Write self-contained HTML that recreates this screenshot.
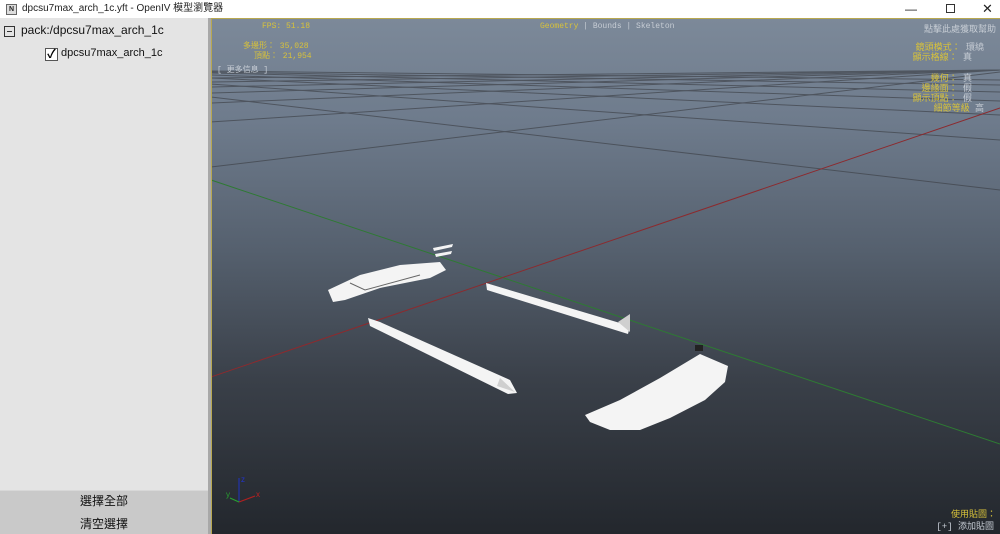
<!DOCTYPE html>
<html><head><meta charset="utf-8"><style>
*{margin:0;padding:0;box-sizing:border-box}
body{width:1000px;height:534px;overflow:hidden;font-family:"Liberation Sans","Noto Sans CJK TC",sans-serif;background:#fff;position:relative}
#title{position:absolute;left:0;top:0;width:1000px;height:18px;background:#fff;font-size:10px;color:#222;line-height:18px}
#left{position:absolute;left:0;top:18px;width:208px;height:516px;background:#e4e4e4}
#split{position:absolute;left:208px;top:18px;width:3px;height:516px;background:#a8a8a8}
#vp{position:absolute;left:211px;top:18px;width:789px;height:516px;background:linear-gradient(#7c8999 0%,#6e7b8c 20%,#55606e 45%,#3a4049 70%,#23272d 100%);border-top:1px solid #b8a850;border-left:1px solid #b8a850;overflow:hidden}
.t{position:absolute;font-family:"Liberation Mono","Noto Sans CJK TC",monospace;font-size:8px;white-space:nowrap}
.y{color:#d8c23a}.g{color:#c6ccd4}
.r{font-size:9px}
</style></head><body>
<div id="title"><span style="position:absolute;left:6px;top:4px;width:11px;height:11px;border:1px solid #666;background:#ddd;font-size:7px;line-height:9px;text-align:center;font-weight:bold">N</span><span style="position:absolute;left:22px">dpcsu7max_arch_1c.yft - OpenIV 模型瀏覽器</span>
<span style="position:absolute;left:905px;top:0;font-size:12px">&#8212;</span>
<span style="position:absolute;left:946px;top:4px;width:9px;height:9px;border:1px solid #333"></span>
<span style="position:absolute;left:982px;top:0;font-size:13px">&#10005;</span></div>
<div id="left">
<div style="position:absolute;left:4px;top:8px;width:11px;height:11px;border:1px solid #333"><div style="position:absolute;left:2px;top:4px;width:5px;height:1px;background:#333"></div></div>
<div style="position:absolute;left:21px;top:5px;font-size:12px;color:#111">pack:/dpcsu7max_arch_1c</div>
<div style="position:absolute;left:45px;top:30px;width:13px;height:13px;border:1px solid #555;background:#fff;font-size:12px;line-height:11px;text-align:center;font-weight:bold">&#10003;</div>
<div style="position:absolute;left:61px;top:29px;font-size:11px;color:#111">dpcsu7max_arch_1c</div>
<div style="position:absolute;left:0;top:472px;width:208px;height:44px;background:#c9c9c9;border-top:1px solid #d8d8d8"></div>
<div style="position:absolute;left:0;top:474px;width:208px;text-align:center;font-size:12px;color:#111">選擇全部</div>
<div style="position:absolute;left:0;top:497px;width:208px;text-align:center;font-size:12px;color:#111">清空選擇</div>
</div>
<div id="split"></div>
<div id="vp">
<svg width="789" height="516" style="position:absolute;left:-1px;top:-1px" viewBox="211 18 789 516">
<g stroke="#3c3f45" stroke-width="1" opacity="0.65" fill="none">
<line x1="211" y1="97" x2="1000" y2="190"/><line x1="211" y1="84" x2="1000" y2="140"/><line x1="211" y1="78" x2="1000" y2="115"/><line x1="211" y1="75" x2="1000" y2="101"/><line x1="211" y1="73" x2="1000" y2="92"/><line x1="211" y1="72" x2="1000" y2="85"/><line x1="211" y1="71" x2="1000" y2="80"/>
<line x1="211" y1="167" x2="1000" y2="72"/><line x1="211" y1="122" x2="1000" y2="70"/><line x1="211" y1="103" x2="1000" y2="70"/><line x1="211" y1="93" x2="1000" y2="70"/><line x1="211" y1="87" x2="1000" y2="70"/><line x1="211" y1="82" x2="1000" y2="70"/><line x1="211" y1="78" x2="1000" y2="70"/>
</g>
<line x1="211" y1="180" x2="1000" y2="444" stroke="#2e7a33" stroke-width="1"/>
<line x1="211" y1="377" x2="1000" y2="108" stroke="#8c2a2e" stroke-width="1"/>
<g fill="#f4f4f4">
<path d="M328 290 L360 275 L400 265 L440 262 L446 270 L430 278 L380 288 L345 300 L333 302 Z"/>
<path d="M433 248 L453 244 L452 247 L434 251Z"/><path d="M435 254 L452 251 L451 254 L436 257Z"/>
<path d="M486 283 L630 326 L628 334 L487 290 Z"/><path d="M618 322 L630 314 L630 332Z" fill="#cfcfcf"/>
<path d="M368 318 L380 322 L510 380 L517 393 L508 394 L370 326 Z"/><path d="M500 378 L515 392 L497 386Z" fill="#cfcfcf"/>
<path d="M585 415 L620 400 L660 378 L700 354 L728 366 L725 382 L705 400 L670 418 L640 430 L610 430 L590 422 Z"/>
</g>
<path d="M350 283 L365 290 L420 275" stroke="#666" stroke-width="1" fill="none"/>
<rect x="695" y="345" width="8" height="6" fill="#222"/>
<g stroke-width="1.2"><line x1="239" y1="502" x2="239" y2="478" stroke="#2233aa"/><line x1="239" y1="502" x2="255" y2="496" stroke="#b02020"/><line x1="239" y1="502" x2="230" y2="498" stroke="#28a030"/></g>
<g font-family="Liberation Sans" font-size="8"><text x="241" y="482" fill="#2233cc">z</text><text x="226" y="497" fill="#28a030">y</text><text x="256" y="497" fill="#c02020">x</text></g>
</svg>
<div class="t y" style="left:50px;top:3px">FPS: 51.18</div>
<div class="t y" style="left:31px;top:21px">多邊形： 35,028</div>
<div class="t y" style="left:42px;top:31px">頂點： 21,954</div>
<div class="t g" style="left:5px;top:45px">[ 更多信息 ]</div>
<div class="t" style="left:328px;top:3px"><span class="y">Geometry</span> <span class="g">| Bounds | Skeleton</span></div>
<div class="t g r" style="right:4px;top:3px">點擊此處獲取幫助</div>
<div class="t r" style="right:16px;top:21px"><span class="y">鏡頭模式：</span><span class="g"> 環繞</span></div>
<div class="t r" style="right:28px;top:31px"><span class="y">顯示格線：</span><span class="g"> 真</span></div>
<div class="t r" style="right:28px;top:52px"><span class="y">幾何：</span><span class="g"> 真</span></div>
<div class="t r" style="right:28px;top:62px"><span class="y">邊緣面：</span><span class="g"> 假</span></div>
<div class="t r" style="right:28px;top:72px"><span class="y">顯示頂點：</span><span class="g"> 假</span></div>
<div class="t r" style="right:16px;top:82px"><span class="y">細節等級</span><span class="g"> 高</span></div>
<div class="t y" style="right:4px;top:488px;font-size:9px">使用貼圖：</div>
<div class="t g" style="right:6px;top:500px;font-size:9px">[+] 添加貼圖</div>
</div>
</body></html>
